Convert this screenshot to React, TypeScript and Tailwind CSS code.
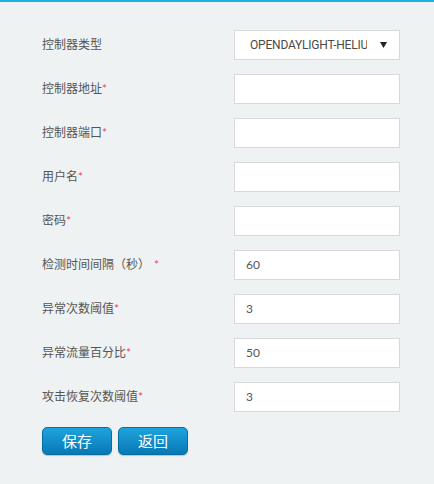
const rows = [
  { label: "控制器地址", value: "" },
  { label: "控制器端口", value: "" },
  { label: "用户名", value: "" },
  { label: "密码", value: "" },
  { label: "检测时间间隔（秒）", value: "60", gap: true },
  { label: "异常次数阈值", value: "3" },
  { label: "异常流量百分比", value: "50" },
  { label: "攻击恢复次数阈值", value: "3" },
];

export default function App() {
  return (
    <div
      className="h-[484px] w-[434px] border-t-2 border-[#1cb0df] bg-[#eff2f3] text-[12px] text-[#555]"
      style={{ fontFamily: 'Lato, "Noto Sans CJK SC", sans-serif' }}
    >
      <div className="flex flex-col gap-[14px] pl-[42px] pt-[28px]">
        <div className="flex h-[30px] items-center">
          <span className="w-[192px]">控制器类型</span>
          <div className="flex h-[30px] w-[166px] items-center border border-[#d6dadc] bg-white pl-[15px] pr-[12px] text-[#4a4a4a]">
            <span
              className="w-[117px] overflow-hidden whitespace-nowrap text-[12px] tracking-[-0.2px]"
              style={{ fontFamily: "Roboto, sans-serif" }}
            >
              OPENDAYLIGHT-HELIUM
            </span>
            <svg className="ml-auto" width="7" height="6" viewBox="0 0 7 6">
              <path d="M0 0H7L3.5 6Z" fill="#222" />
            </svg>
          </div>
        </div>
        {rows.map((r) => (
          <div key={r.label} className="flex h-[30px] items-center">
            <span className="w-[192px]">
              {r.label}
              <span className={`text-[12px] text-[#e0505c] ${r.gap ? "ml-[4px]" : ""}`}>*</span>
            </span>
            <div className="flex h-[30px] w-[166px] items-center border border-[#d6dadc] bg-white pl-[11px] text-[12px]">
              {r.value}
            </div>
          </div>
        ))}
        <div className="mt-[1px] flex gap-[6px]">
          <button className="h-[28px] w-[70px] rounded-[5px] border border-[#0a6ea3] bg-gradient-to-b from-[#1ea3dd] to-[#0779b5] text-[15px] text-white shadow-[0_1px_1px_rgba(0,0,0,0.2)]">
            保存
          </button>
          <button className="h-[28px] w-[70px] rounded-[5px] border border-[#0a6ea3] bg-gradient-to-b from-[#1ea3dd] to-[#0779b5] text-[15px] text-white shadow-[0_1px_1px_rgba(0,0,0,0.2)]">
            返回
          </button>
        </div>
      </div>
    </div>
  );
}
